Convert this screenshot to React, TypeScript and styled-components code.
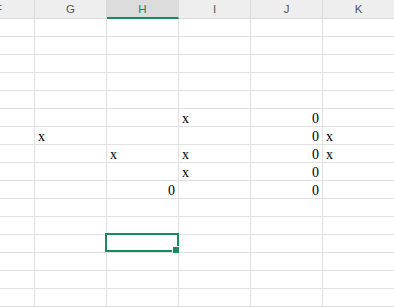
import React from "react";
import styled, { createGlobalStyle } from "styled-components";

const Global = createGlobalStyle`
  html, body { margin: 0; padding: 0; background: #fff; }
  body { width: 394px; height: 307px; overflow: hidden; }
`;

const Viewport = styled.div`
  width: 394px;
  height: 307px;
  overflow: hidden;
  background: #fff;
`;

const Grid = styled.div`
  display: grid;
  grid-template-columns: repeat(6, 72px);
  grid-auto-rows: 18px;
  grid-template-rows: 19px;
  margin-left: -37px;
  width: max-content;
`;

const HeaderCell = styled.div<{ $active?: boolean }>`
  box-sizing: border-box;
  background: ${(p) => (p.$active ? "#dcdcdc" : "#eeeeee")};
  border-right: 1px solid #dadada;
  border-bottom: ${(p) => (p.$active ? "2px solid #1a8a5c" : "1px solid #dadada")};
  display: flex;
  align-items: center;
  justify-content: center;
  padding-top: ${(p) => (p.$active ? "1px" : "0")};
  font-family: "Liberation Sans", Arial, sans-serif;
  font-size: 11.5px;
  color: ${(p) => (p.$active ? "#1a8a5c" : "#555555")};
`;

const Cell = styled.div<{ $align?: "left" | "right" }>`
  position: relative;
  box-sizing: border-box;
  border-right: 1px solid #e1e1e1;
  border-bottom: 1px solid #e1e1e1;
  display: flex;
  align-items: flex-end;
  justify-content: ${(p) => (p.$align === "right" ? "flex-end" : "flex-start")};
  padding: 0 3px 0 3px;
  font-family: "Liberation Serif", "Times New Roman", serif;
  font-size: 14px;
  line-height: 15px;
  color: #000;
`;

const Selection = styled.div`
  position: absolute;
  left: -2px;
  top: -2px;
  right: -1px;
  bottom: 0;
  border: 2px solid #1a8a5c;
  pointer-events: none;
`;

const Handle = styled.div`
  position: absolute;
  right: -3px;
  bottom: -4px;
  width: 6px;
  height: 6px;
  background: #1a8a5c;
  border: 1px solid #fff;
`;

const columns = ["F", "G", "H", "I", "J", "K"];
const ROWS = 17;

const data: Record<string, string> = {
  "5-I": "x",
  "5-J": "0",
  "6-G": "x",
  "6-J": "0",
  "6-K": "x",
  "7-H": "x",
  "7-I": "x",
  "7-J": "0",
  "7-K": "x",
  "8-I": "x",
  "8-J": "0",
  "9-H": "0",
  "9-J": "0",
};

export default function App() {
  return (
    <>
      <Global />
      <Viewport>
        <Grid>
          {columns.map((c) => (
            <HeaderCell key={c} $active={c === "H"}>
              {c}
            </HeaderCell>
          ))}
          {Array.from({ length: ROWS }).map((_, r) =>
            columns.map((c) => {
              const v = data[`${r}-${c}`];
              return (
                <Cell key={`${r}-${c}`} $align={v === "0" ? "right" : "left"}>
                  {v}
                  {r === 12 && c === "H" && (
                    <Selection>
                      <Handle />
                    </Selection>
                  )}
                </Cell>
              );
            })
          )}
        </Grid>
      </Viewport>
    </>
  );
}
